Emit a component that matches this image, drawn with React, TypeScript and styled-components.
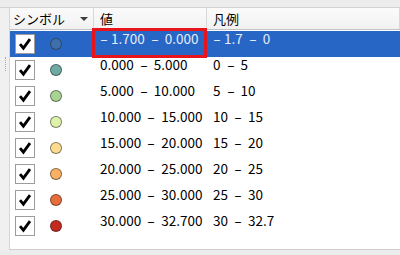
import React from 'react';
import styled, { createGlobalStyle } from 'styled-components';

const GlobalStyle = createGlobalStyle`
  html, body {
    margin: 0;
    padding: 0;
    background: #ececec;
    overflow: hidden;
  }
  body {
    font-family: "Noto Sans CJK JP", "Noto Sans", sans-serif;
    font-size: 13px;
  }
`;

const Page = styled.div`
  width: 400px;
  height: 255px;
  display: flex;
  flex-direction: column;
  background: #ececec;
`;

const TopStrip = styled.div`
  height: 7px;
  background: #ececec;
  border-bottom: 1px solid #d2d2d2;
`;

const Body = styled.div`
  display: flex;
  height: 242px;
`;

const Gutter = styled.div`
  width: 9px;
  background: #f0f0f0;
  display: flex;
  flex-direction: column;
`;

const Grip = styled.div`
  margin: 49px 0 0 5px;
  height: 14px;
  border-left: 1px dotted #a8a8a8;
`;

const Table = styled.div`
  position: relative;
  flex: 1;
  background: #fff;
  border-left: 1px solid #d6d6d6;
  border-bottom: 1px solid #cfcfcf;
`;

const Cols = styled.div`
  display: grid;
  grid-template-columns: 84px 113px 1fr;
`;

const Header = styled(Cols)`
  height: 21px;
  background: linear-gradient(#fbfbfb, #f1f1f1);
  border-bottom: 1px solid #c2c2c2;
`;

const HeadCell = styled.div<{ $pad: number }>`
  display: flex;
  align-items: center;
  padding-left: ${p => p.$pad}px;
  border-right: 1px solid #d8d8d8;
  color: #000;
  font-size: 13px;
  line-height: 1;
`;

const SortArrow = styled.span`
  margin-left: auto;
  margin-right: 5px;
  width: 0;
  height: 0;
  border-left: 4px solid transparent;
  border-right: 4px solid transparent;
  border-top: 4px solid #3c3c3c;
`;

const Rows = styled.div`
  padding-top: 1px;
`;

const Row = styled(Cols)<{ $selected?: boolean }>`
  height: 26px;
  background: ${p => (p.$selected ? '#2866c5' : '#fff')};
  color: ${p => (p.$selected ? '#e4ecf8' : '#000')};
`;

const SymbolCell = styled.div`
  display: flex;
  align-items: center;
  padding-left: 5px;
`;

const Check = styled.span`
  box-sizing: border-box;
  width: 20px;
  height: 20px;
  background: #fff;
  border: 1px solid #9c9c9c;
  display: flex;
  align-items: center;
  justify-content: center;
`;

const Dot = styled.span<{ $color: string }>`
  box-sizing: border-box;
  width: 12px;
  height: 12px;
  margin-left: 15px;
  border-radius: 50%;
  background: ${p => p.$color};
  border: 1px solid rgba(40, 40, 40, 0.55);
`;

const TextCell = styled.div`
  padding: 0 0 0 6px;
  font-size: 13.5px;
  line-height: 14px;
  white-space: nowrap;
`;

const Dash = styled.span<{ $lead?: boolean }>`
  display: inline-block;
  width: ${p => (p.$lead ? 11 : 14)}px;
  text-align: ${p => (p.$lead ? 'left' : 'center')};
  transform: scaleX(1.7);
  transform-origin: ${p => (p.$lead ? '0 50%' : '50% 50%')};
`;

const Highlight = styled.div`
  position: absolute;
  left: 82px;
  top: 20px;
  width: 115px;
  height: 30px;
  box-sizing: border-box;
  border: 3px solid #e8141c;
`;

const CheckMark = () => (
  <svg width="14" height="14" viewBox="0 0 14 14">
    <path d="M2 7.2 L5.4 11.2 L12 2.2" fill="none" stroke="#000" strokeWidth="2.8" strokeLinejoin="miter" />
  </svg>
);

const withDashes = (s: string) =>
  s.split('-').flatMap((part, i) =>
    i === 0 ? [part] : [<Dash key={i} $lead={i === 1 && s.startsWith('-')}>-</Dash>, part]
  );

const classes = [
  { value: '-1.700 - 0.000', legend: '-1.7 - 0', color: '#3d70aa' },
  { value: '0.000 - 5.000', legend: '0 - 5', color: '#6eaaa1' },
  { value: '5.000 - 10.000', legend: '5 - 10', color: '#a8d493' },
  { value: '10.000 - 15.000', legend: '10 - 15', color: '#def2a9' },
  { value: '15.000 - 20.000', legend: '15 - 20', color: '#fddc8f' },
  { value: '20.000 - 25.000', legend: '20 - 25', color: '#f9b062' },
  { value: '25.000 - 30.000', legend: '25 - 30', color: '#e86d3b' },
  { value: '30.000 - 32.700', legend: '30 - 32.7', color: '#c52a21' },
];

export default function App() {
  return (
    <>
      <GlobalStyle />
      <Page>
        <TopStrip />
        <Body>
          <Gutter>
            <Grip />
          </Gutter>
          <Table>
            <Header>
              <HeadCell $pad={3}>
                シンボル
                <SortArrow />
              </HeadCell>
              <HeadCell $pad={6}>値</HeadCell>
              <HeadCell $pad={6}>凡例</HeadCell>
            </Header>
            <Rows>
              {classes.map((c, i) => (
                <Row key={c.value} $selected={i === 0}>
                  <SymbolCell>
                    <Check>
                      <CheckMark />
                    </Check>
                    <Dot $color={c.color} />
                  </SymbolCell>
                  <TextCell>{withDashes(c.value)}</TextCell>
                  <TextCell>{withDashes(c.legend)}</TextCell>
                </Row>
              ))}
            </Rows>
            <Highlight />
          </Table>
        </Body>
      </Page>
    </>
  );
}
